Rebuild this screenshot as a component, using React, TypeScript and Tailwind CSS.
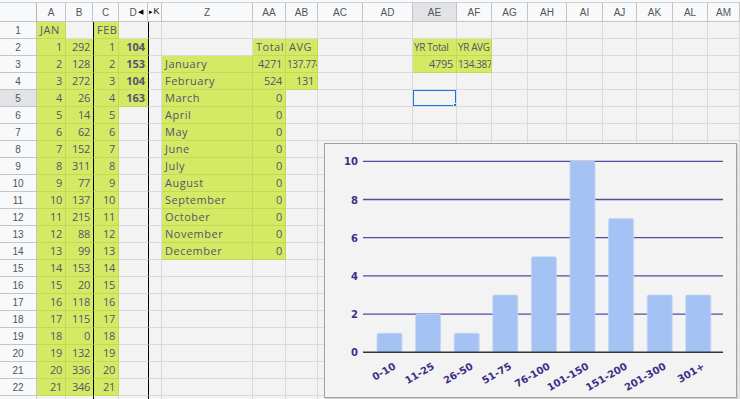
import React from "react";

const COLS = "grid grid-cols-[37px_29px_27px_26px_29px_14px_91px_33px_32px_45px_50px_44px_35px_36px_39px_36px_34px_36px_35px_32px]";
const LETTERS = ["", "A", "B", "C", "D", "K", "Z", "AA", "AB", "AC", "AD", "AE", "AF", "AG", "AH", "AI", "AJ", "AK", "AL", "AM"];

const JAN = [292, 128, 272, 26, 14, 62, 152, 311, 77, 137, 215, 88, 99, 153, 20, 118, 115, 0, 132, 336, 346];
const FEB_D = [104, 153, 104, 163];
const MONTHS = ["January", "February", "March", "April", "May", "June", "July", "August", "September", "October", "November", "December"];
const BINS = [
  { label: "0-10", v: 1 },
  { label: "11-25", v: 2 },
  { label: "26-50", v: 1 },
  { label: "51-75", v: 3 },
  { label: "76-100", v: 5 },
  { label: "101-150", v: 10 },
  { label: "151-200", v: 7 },
  { label: "201-300", v: 3 },
  { label: "301+", v: 3 },
];

type CellData = { text?: string | number; align?: "l" | "r"; bold?: boolean; tight?: boolean };

// contenu d'une cellule (r = numéro de ligne, c = index de colonne)
function cellData(r: number, c: number): CellData {
  if (c === 1) return r === 1 ? { text: "JAN", align: "l" } : { text: r - 1, align: "r" };
  if (c === 2 && r >= 2) return { text: JAN[r - 2], align: "r" };
  if (c === 3) return r === 1 ? { text: "FEB", align: "l" } : { text: r - 1, align: "r" };
  if (c === 4 && r >= 2 && r <= 5) return { text: FEB_D[r - 2], align: "r", bold: true };
  if (c === 6 && r >= 3 && r <= 14) return { text: MONTHS[r - 3], align: "l" };
  if (c === 7) {
    if (r === 2) return { text: "Total", align: "l" };
    if (r === 3) return { text: 4271, align: "r" };
    if (r === 4) return { text: 524, align: "r" };
    if (r >= 5 && r <= 14) return { text: 0, align: "r" };
  }
  if (c === 8) {
    if (r === 2) return { text: "AVG", align: "l" };
    if (r === 3) return { text: "137.774", align: "l", tight: true };
    if (r === 4) return { text: 131, align: "r" };
  }
  if (c === 11) {
    if (r === 2) return { text: "YR Total", align: "l", tight: true };
    if (r === 3) return { text: 4795, align: "r" };
  }
  if (c === 12) {
    if (r === 2) return { text: "YR AVG", align: "l", tight: true };
    if (r === 3) return { text: "134.387", align: "l", tight: true };
  }
  return {};
}

function isGreen(r: number, c: number) {
  if (c === 1 || c === 3) return r >= 1 && r <= 22;
  if (c === 2) return r >= 2 && r <= 22;
  if (c === 4) return r >= 2 && r <= 5;
  if (c === 6) return r >= 3 && r <= 14;
  if (c === 7) return r >= 2 && r <= 14;
  if (c === 8) return r >= 2 && r <= 4;
  if (c === 11 || c === 12) return r >= 2 && r <= 3;
  return false;
}

function Cell({ r, c }: { r: number; c: number }) {
  const d = cellData(r, c);
  const green = isGreen(r, c);
  const selected = r === 5 && c === 11;
  const word = typeof d.text === "string" && !d.tight;
  return (
    <div
      className={[
        "relative flex items-center overflow-hidden whitespace-nowrap border-b border-r text-[#58536f]",
        d.tight ? "px-[1px] text-[10px] tracking-[-0.4px]" : "px-[3px] text-[11px]",
        word ? "tracking-[0.5px]" : "",
        typeof d.text === "number" && !d.bold ? "tracking-[-0.3px]" : "",
        green ? "bg-[#d4ea64] border-[#c3da58]" : "border-[#dadada]",
        d.align === "r" ? "justify-end" : "justify-start",
        d.bold ? "font-bold text-[#4f4a66]" : "",
        c === 2 ? "border-r-0" : "",
        c === 3 || c === 5 ? "border-l border-l-black" : "",
        c === 4 ? "border-r-0" : "",
      ].join(" ")}
    >
      {d.text !== undefined && <span>{d.text}</span>}
      {selected && (
        <>
          <span className="absolute inset-[-1px] border-2 border-[#1a73e8]" />
          <span className="absolute right-[-3px] bottom-[-3px] h-[6px] w-[6px] border border-white bg-[#1a73e8]" />
        </>
      )}
    </div>
  );
}

function Chart() {
  const y0 = 208.3;
  const step = 19.1;
  return (
    <div className="absolute left-[324px] top-[143px] h-[255px] w-[413px] border border-[#a3a3a3] bg-[#f3f3f3] shadow-[1px_1px_0_#cfcfcf]">
      <svg width="411" height="253" className="block" style={{ fontFamily: "'DejaVu Sans', sans-serif" }}>
        {[10, 8, 6, 4, 2].map((v) => (
          <g key={v}>
            <line x1="38" x2="398" y1={y0 - v * step} y2={y0 - v * step} stroke="#56489f" strokeWidth="1.3" />
            <text x="33" y={y0 - v * step + 4} textAnchor="end" fontSize="10" fontWeight="bold" fill="#3d2f86">
              {v}
            </text>
          </g>
        ))}
        <text x="33" y={y0 + 4} textAnchor="end" fontSize="10" fontWeight="bold" fill="#3d2f86">
          0
        </text>
        {BINS.map((b, i) => {
          const cx = 64.5 + i * 38.6;
          const h = b.v * step;
          return (
            <g key={b.label}>
              <rect x={cx - 12.5} y={y0 - h} width="25" height={h} rx="1.5" fill="#a4c2f4" stroke="#c3d6f7" strokeWidth="0.8" />
              <text
                x={cx + 7}
                y={y0 + 16}
                textAnchor="end"
                fontSize="10"
                fontWeight="bold"
                fill="#3d2f86"
                transform={`rotate(-30 ${cx + 7} ${y0 + 16})`}
              >
                {b.label}
              </text>
            </g>
          );
        })}
        <line x1="38" x2="398" y1={y0} y2={y0} stroke="#333" strokeWidth="1.5" />
      </svg>
    </div>
  );
}

export default function App() {
  const rows = Array.from({ length: 23 }, (_, i) => i + 1);
  return (
    <div className="relative h-[399px] w-[740px] overflow-hidden bg-[#f3f3f3] font-['Open_Sans',sans-serif]">
      <div className="h-[3px] border-b border-[#cfcfcf] bg-[#f8f9fa]" />
      {/* en-têtes de colonnes */}
      <div className={`${COLS} h-[19px] font-['Liberation_Sans',Arial,sans-serif] text-[10px] text-[#555]`}>
        {LETTERS.map((l, c) => (
          <div
            key={c}
            className={[
              "relative flex items-center justify-center border-b border-r border-[#c4c4c4]",
              c === 11 ? "bg-[#e1e3e6]" : "bg-[#f8f9fa]",
              c === 0 ? "border-r-[#b5b5b5]" : "",
            ].join(" ")}
          >
            {c === 5 ? (
              <span className="flex items-center text-[9px] text-black">
                <span className="text-[7px]">▸</span>K
              </span>
            ) : (
              l
            )}
            {c === 4 && <span className="absolute right-[4px] text-[7px] text-black">◀</span>}
          </div>
        ))}
      </div>
      {rows.map((r) => (
        <div key={r} className={`${COLS} h-[17px]`}>
          <div
            className={[
              "flex items-center justify-center border-b border-r border-[#c4c4c4] font-['Liberation_Sans',Arial,sans-serif] text-[10px] text-[#555]",
              r === 5 ? "bg-[#e1e3e6]" : "bg-[#f8f9fa]",
            ].join(" ")}
          >
            {r}
          </div>
          {LETTERS.slice(1).map((_, i) => (
            <Cell key={i} r={r} c={i + 1} />
          ))}
        </div>
      ))}
      <Chart />
    </div>
  );
}
